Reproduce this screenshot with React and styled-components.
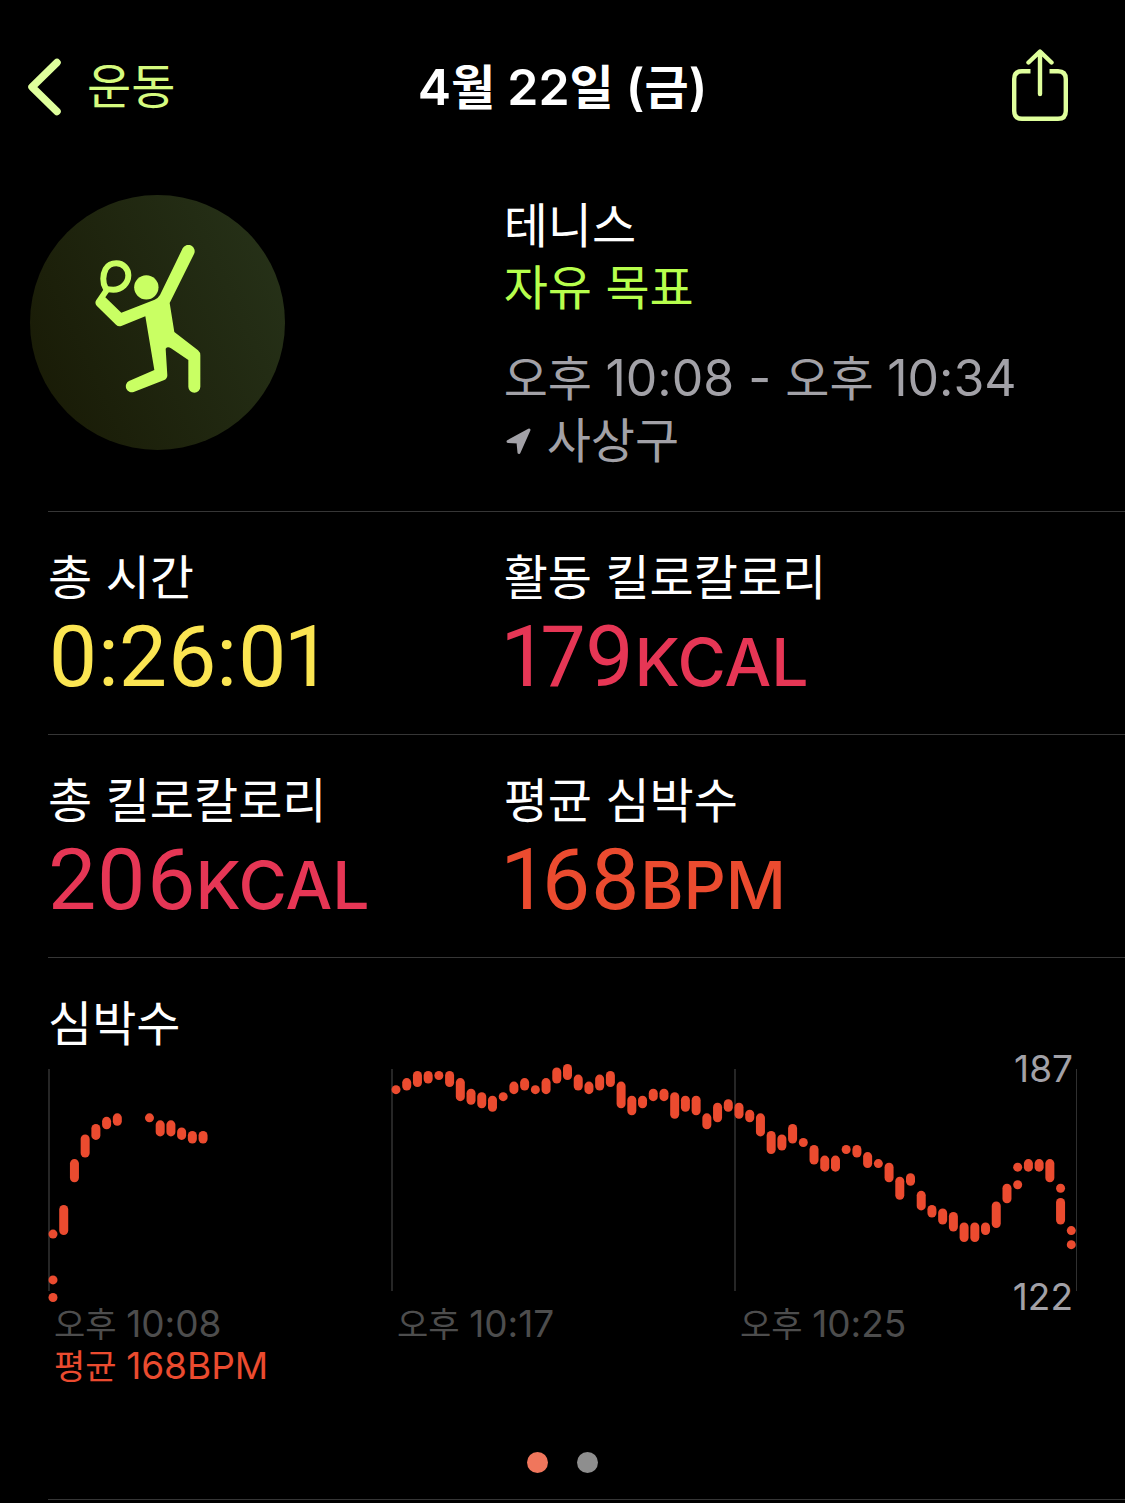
import React from 'react';
import styled, { createGlobalStyle } from 'styled-components';

const COLORS = {
  white: '#ffffff',
  tint: '#dfff9c',
  link: '#d6fb7f',
  lime: '#b7ff4d',
  gray: '#a2a1a7',
  dim: '#4d4d4d',
  line: '#363636',
  yellow: '#fbe552',
  pink: '#e63655',
  orange: '#eb4b2f',
};

const METRICS = [
  [
    { label: '총 시간', value: '0:26:01', color: COLORS.yellow },
    { label: '활동 킬로칼로리', value: '179', unit: 'KCAL', color: COLORS.pink },
  ],
  [
    { label: '총 킬로칼로리', value: '206', unit: 'KCAL', color: COLORS.pink },
    { label: '평균 심박수', value: '168', unit: 'BPM', color: COLORS.orange },
  ],
];

// [slot, highest bpm, lowest bpm], 96 slots over the whole workout
const HEART_RATE = [
  [0, 140, 140], [0, 127, 127], [0, 122, 122], [1, 147, 141], [2, 160, 156],
  [3, 167, 163], [4, 170, 168], [5, 172, 171], [6, 173, 172],
  [9, 173, 173], [10, 171, 169], [11, 171, 169], [12, 169, 168],
  [13, 168, 167], [14, 168, 167],
  [32, 181, 181], [33, 183, 182], [34, 185, 183], [35, 185, 184],
  [36, 185, 185], [37, 185, 183], [38, 183, 179], [39, 180, 178],
  [40, 179, 177], [41, 178, 176], [42, 179, 179], [43, 182, 181],
  [44, 183, 182], [45, 181, 181], [46, 183, 181], [47, 186, 184],
  [48, 187, 185], [49, 184, 182], [50, 182, 181], [51, 184, 182],
  [52, 185, 183], [53, 182, 177], [54, 178, 175], [55, 178, 177],
  [56, 180, 179], [57, 180, 179], [58, 179, 174], [59, 178, 176],
  [60, 178, 175], [61, 173, 171], [62, 176, 173], [63, 177, 176],
  [64, 176, 174], [65, 174, 173], [66, 173, 169], [67, 168, 164],
  [68, 167, 165], [69, 170, 167], [70, 166, 166], [71, 164, 161],
  [72, 161, 159], [73, 161, 159], [74, 164, 164], [75, 164, 163],
  [76, 162, 160], [77, 160, 160], [78, 159, 156], [79, 155, 151],
  [80, 156, 155], [81, 151, 148], [82, 147, 146], [83, 146, 144],
  [84, 145, 142], [85, 142, 139], [86, 142, 139], [87, 142, 141],
  [88, 148, 143], [89, 153, 150], [90, 159, 159], [90, 154, 154],
  [91, 160, 159], [92, 160, 159], [93, 160, 156], [94, 153, 153],
  [94, 149, 144], [95, 141, 141], [95, 137, 137],
];

const MAX_BPM = 187;
const MIN_BPM = 122;
const CHART = { width: 1029, height: 238, bar: 9 };

const barX = (slot) => (slot * 343) / 32 + 0.5;
const barY = (bpm) =>
  ((MAX_BPM - bpm) * (CHART.height - CHART.bar)) / (MAX_BPM - MIN_BPM);

const BackIcon = () => (
  <svg width="34" height="58" viewBox="0 0 34 58" fill="none" aria-hidden="true">
    <path
      d="M29 4.5 4 29l25 24.5"
      stroke="currentColor"
      strokeWidth="7.5"
      strokeLinecap="round"
      strokeLinejoin="round"
    />
  </svg>
);

const ShareIcon = () => (
  <svg width="58" height="76" viewBox="0 1 58 76" fill="none" aria-hidden="true">
    <g stroke="currentColor" strokeWidth="4.4">
      <path d="M19.5 23.2H11Q3.2 23.2 3.2 31V63Q3.2 70.8 11 70.8H47Q54.8 70.8 54.8 63V31Q54.8 23.2 47 23.2H38.5" />
      <path d="M29 4V46M17.5 14.5 29 3.5l11.5 11" strokeLinecap="round" strokeLinejoin="round" />
    </g>
  </svg>
);

const TennisIcon = () => (
  <svg width="106" height="148" viewBox="224 179 318 444" aria-hidden="true">
    <g fill="#c9ff63">
      <circle cx="378" cy="306" r="36.5" />
      <path d="M375 393 303 422Q294 425 287 418L229 361Q222 353 228 344L250 312 266 320 255 336 303 382 403 343Q413 339 419 329L487 189A18.5 18.5 0 0 1 521 206L448 353 462 440 533 495Q540 501 540 510V604A18 18 0 0 1 504 604V524L452 489Q442 482 436 490L441 570Q441 580 432 584L340 620A18 18 0 0 1 326 587L402 554Z" />
    </g>
    <path
      d="M256 309C246 292 247 268 256 251C264 238 277 234 288 234C309 234 324 250 324 270C324 294 304 313 279 313C270 313 262 312 256 309Z"
      fill="none"
      stroke="#c9ff63"
      strokeWidth="18"
      strokeLinejoin="round"
    />
  </svg>
);

const LocationIcon = () => (
  <svg width="28" height="28" viewBox="-1 0 28 28" aria-hidden="true">
    <path
      d="M3 14.5 24 3 14 25.5 13 15Z"
      fill="currentColor"
      stroke="currentColor"
      strokeWidth="3"
      strokeLinejoin="round"
    />
  </svg>
);

const HeartRateChart = () => (
  <ChartSvg
    viewBox={`0 0 ${CHART.width} ${CHART.height}`}
    role="img"
    aria-label="심박수"
  >
    {[0, 343, 686].map((x) => (
      <rect key={x} x={x} y="5" width="2" height="222" fill="#262626" />
    ))}
    <rect x="1028" y="5" width="1" height="222" fill="#303030" />
    {HEART_RATE.map(([slot, high, low]) => (
      <rect
        key={`${slot}-${high}`}
        x={barX(slot)}
        y={barY(high)}
        width={CHART.bar}
        height={barY(low) - barY(high) + CHART.bar}
        rx={CHART.bar / 2}
        fill={COLORS.orange}
      />
    ))}
  </ChartSvg>
);

const Metric = ({ label, value, unit, color }) => (
  <div>
    <Label>{label}</Label>
    <Value $color={color}>
      {value}
      {unit && <Unit>{unit}</Unit>}
    </Value>
  </div>
);

const App = () => {
  return (
    <Page>
      <GlobalStyle />
      <Header>
        <BackButton type="button">
          <BackIcon />
          운동
        </BackButton>
        <Title>
          <Latin>4</Latin>월 <Latin>22</Latin>일 <Latin>(</Latin>금<Latin>)</Latin>
        </Title>
        <ShareButton type="button" aria-label="공유">
          <ShareIcon />
        </ShareButton>
      </Header>

      <Summary>
        <Badge>
          <TennisIcon />
        </Badge>
        <div>
          <Line>테니스</Line>
          <Line $color={COLORS.lime}>자유 목표</Line>
          <Details>
            <Line $color={COLORS.gray}>
              오후 <Latin>10:08 - </Latin>오후 <Latin>10:34</Latin>
            </Line>
            <Place $color={COLORS.gray}>
              <LocationIcon />
              사상구
            </Place>
          </Details>
        </div>
      </Summary>

      {METRICS.map((row) => (
        <MetricRow key={row[0].label}>
          {row.map((metric) => (
            <Metric key={metric.label} {...metric} />
          ))}
        </MetricRow>
      ))}

      <ChartSection>
        <Label>심박수</Label>
        <ChartArea>
          <HeartRateChart />
          <MaxLabel>{MAX_BPM}</MaxLabel>
          <MinLabel>{MIN_BPM}</MinLabel>
        </ChartArea>
        <Axis>
          <AxisLabel>오후 <SmallLatin>10:08</SmallLatin></AxisLabel>
          <AxisLabel>오후 <SmallLatin>10:17</SmallLatin></AxisLabel>
          <AxisLabel>오후 <SmallLatin>10:25</SmallLatin></AxisLabel>
        </Axis>
        <AxisLabel $color={COLORS.orange}>
          평균 <SmallLatin>168BPM</SmallLatin>
        </AxisLabel>
      </ChartSection>

      <Pager>
        <Dot type="button" aria-label="1" $active />
        <Dot type="button" aria-label="2" />
      </Pager>
      <Divider />
    </Page>
  );
};

const GlobalStyle = createGlobalStyle`
  *, *::before, *::after {
    box-sizing: border-box;
  }

  body {
    margin: 0;
    background: #000;
    color: ${COLORS.white};
    font-family: Inter, 'Noto Sans CJK KR', sans-serif;
    font-size: 48px;
    line-height: 62px;
  }

  h1, h2, p {
    margin: 0;
    font-size: inherit;
    font-weight: 400;
  }

  button {
    padding: 0;
    border: 0;
    background: none;
    font: inherit;
    cursor: pointer;
  }

  svg {
    display: block;
    flex-shrink: 0;
  }
`;

const Page = styled.main`
  min-height: 100vh;
  overflow: hidden;
`;

const Header = styled.header`
  display: grid;
  grid-template-columns: 1fr auto 1fr;
  align-items: center;
  padding: 49px 28px 0;
`;

const BackButton = styled.button`
  display: flex;
  align-items: center;
  gap: 25px;
  justify-self: start;
  color: ${COLORS.link};

  svg {
    color: ${COLORS.tint};
  }
`;

const Title = styled.h1`
  && {
    padding-top: 2px;
    font-weight: 600;
  }
`;

const ShareButton = styled.button`
  justify-self: end;
  margin-right: 28px;
  color: ${COLORS.tint};
`;

const Latin = styled.span`
  font-size: 50px;
  line-height: 1;
  white-space: pre;
`;

const SmallLatin = styled.span`
  font-size: 37px;
  line-height: 1;
`;

const Columns = styled.section`
  display: grid;
  grid-template-columns: 11fr 15fr;
  margin-left: 48px;
`;

const Summary = styled(Columns)`
  padding: 70px 0 39px;
`;

const Badge = styled.div`
  display: flex;
  align-items: center;
  justify-content: center;
  width: 255px;
  height: 255px;
  margin-left: -18px;
  padding-right: 20px;
  padding-bottom: 8px;
  border-radius: 50%;
  background: linear-gradient(65deg, #191b06 8%, #263118 92%);
`;

const Line = styled.p`
  color: ${({ $color }) => $color || COLORS.white};
`;

const Details = styled.div`
  margin-top: 29px;
`;

const Place = styled(Line)`
  display: flex;
  align-items: center;
  gap: 15px;
`;

const MetricRow = styled(Columns)`
  padding: 35px 0 30px;
  border-top: 1px solid ${COLORS.line};
`;

const Label = styled.h2`
  color: ${COLORS.white};
`;

const Value = styled.p`
  && {
    color: ${({ $color }) => $color};
    font-family: Roboto, sans-serif;
    font-size: 86px;
    font-variant-numeric: proportional-nums;
    line-height: 95px;
  }
`;

const Unit = styled.span`
  font-family: Inter, sans-serif;
  font-size: 66px;
  font-weight: 500;
  line-height: 1;
`;

const ChartSection = styled.section`
  margin-left: 48px;
  padding: 35px 48px 0 0;
  border-top: 1px solid ${COLORS.line};
`;

const ChartArea = styled.div`
  position: relative;
  margin-top: 9px;
`;

const ChartSvg = styled.svg`
  width: 100%;
  height: auto;
`;

const RangeLabel = styled.span`
  position: absolute;
  right: 4px;
  color: ${COLORS.gray};
  font-size: 37px;
  line-height: 42px;
`;

const MaxLabel = styled(RangeLabel)`
  top: -16px;
`;

const MinLabel = styled(RangeLabel)`
  bottom: -16px;
`;

const Axis = styled.div`
  display: grid;
  grid-template-columns: repeat(3, 1fr);
  padding-top: 2px;
`;

const AxisLabel = styled.p`
  && {
    padding-left: 6px;
    color: ${({ $color }) => $color || COLORS.dim};
    font-size: 34px;
    line-height: 42px;
  }
`;

const Pager = styled.nav`
  display: flex;
  justify-content: center;
  gap: 29px;
  padding: 64px 0 26px;
`;

const Dot = styled.button`
  && {
    width: 21px;
    height: 21px;
    border-radius: 50%;
    background: ${({ $active }) => ($active ? '#f0765c' : '#8e8e8e')};
  }
`;

const Divider = styled.hr`
  margin: 0 0 0 48px;
  border: 0;
  border-top: 1px solid ${COLORS.line};
`;

export default App;
